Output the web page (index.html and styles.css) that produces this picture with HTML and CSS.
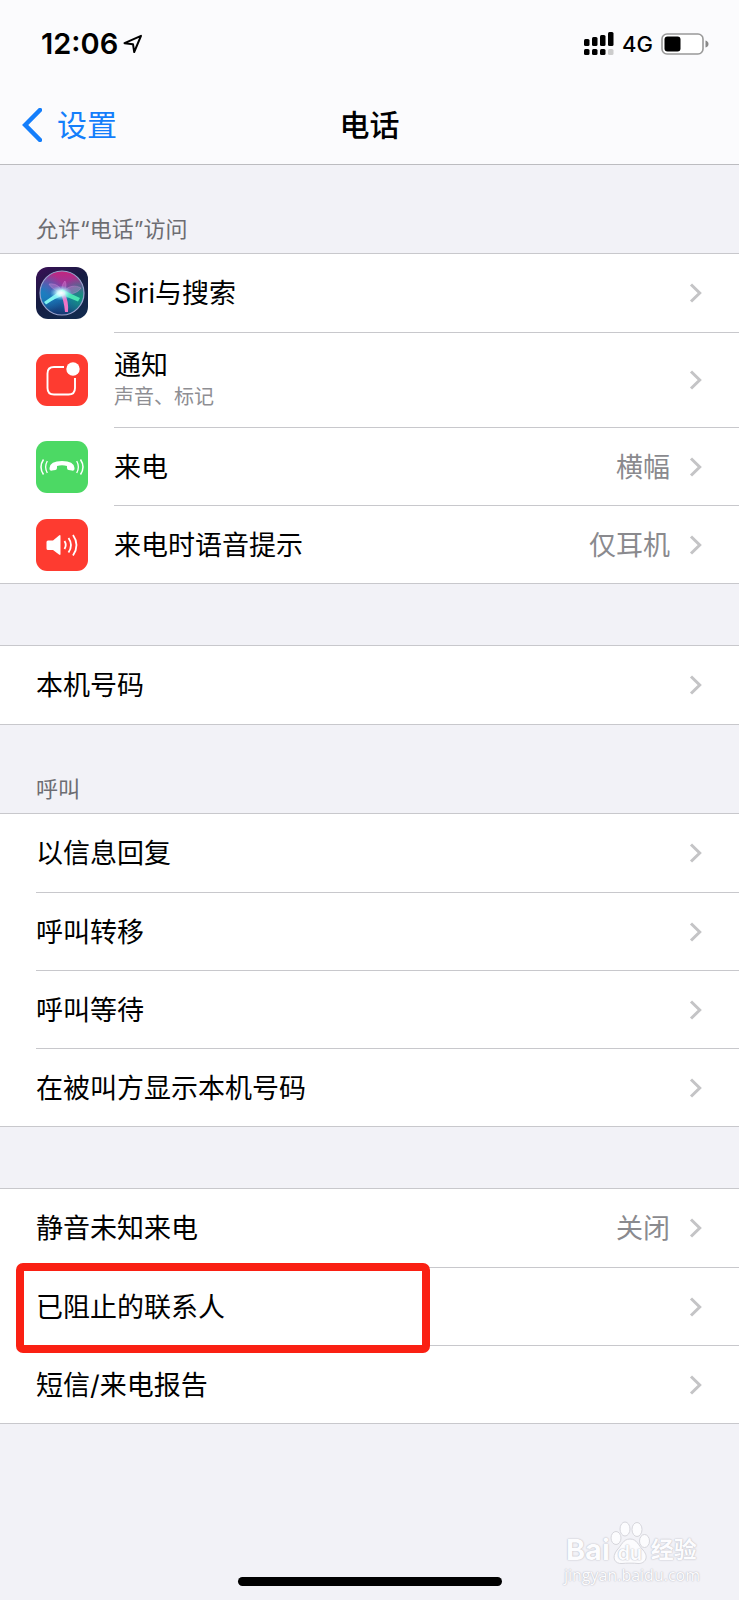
FILE: index.html
```html
<!DOCTYPE html>
<html lang="zh-CN">
<head>
<meta charset="utf-8">
<meta name="viewport" content="width=device-width, initial-scale=1">
<title>电话</title>
<link rel="stylesheet" href="styles.css">
</head>
<body>
<svg class="defs" width="0" height="0" aria-hidden="true">
  <symbol id="chevron" viewBox="0 0 14 22"><path d="M2 2.500 L10.700 11 L2 19.500" fill="none" stroke="currentColor" stroke-width="3"/></symbol>
</svg>
<div class="screen">
  <header class="top">
    <div class="status">
      <div class="status-left">
        <span class="time">12:06</span>
        <svg class="location" viewBox="0 0 20 20" aria-hidden="true"><path d="M1.5 9.2 L18 1.8 L11.2 18 L10 10.2 Z" fill="none" stroke="#000" stroke-width="2" stroke-linejoin="round"/></svg>
      </div>
      <div class="status-right">
        <svg class="signal" viewBox="0 0 30 24" aria-hidden="true">
          <rect x="0" y="7" width="5.500" height="7" rx="1.500"/><rect x="8" y="5" width="5.500" height="9" rx="1.500"/><rect x="16" y="3" width="5.500" height="11" rx="1.500"/><rect x="24" y="0" width="5.500" height="14" rx="1.500"/>
          <rect x="0" y="17" width="5.500" height="6" rx="1.500"/><rect x="8" y="17" width="5.500" height="6" rx="1.500"/><rect x="16" y="17" width="5.500" height="6" rx="1.500"/><rect x="24" y="17" width="5.500" height="6" rx="1.500" fill="#ccc"/>
        </svg>
        <span class="network">4G</span>
        <svg class="battery" viewBox="0 0 48 22" aria-hidden="true">
          <rect x="1" y="1" width="41" height="20" rx="5" fill="#fff" stroke="#999" stroke-width="1.6"/>
          <rect x="3.500" y="3.500" width="16" height="15" rx="3"/>
          <path d="M44.500 7.500 Q47.500 8.500 47.500 11 T44.500 14.500 Z" fill="#888"/>
        </svg>
      </div>
    </div>
    <nav class="nav">
      <a class="back" href="#"><svg viewBox="0 0 20 34" aria-hidden="true"><path d="M18 2 L3.200 17 L18 32" fill="none" stroke="currentColor" stroke-width="4.500" stroke-linecap="round"/></svg>设置</a>
      <h1 class="title">电话</h1>
    </nav>
  </header>
  <main>
    <h2 class="heading">允许“电话”访问</h2>
    <ul class="group with-icons">
      <li class="item"><a class="row" href="#">
        <svg class="icon" viewBox="0 0 52 52" aria-hidden="true">
          <defs>
            <linearGradient id="bg" x1="0" y1="0" x2="0.6" y2="1"><stop offset="0" stop-color="#3b0f56"/><stop offset="0.5" stop-color="#161b42"/><stop offset="1" stop-color="#12294d"/></linearGradient>
            <linearGradient id="orb" x1="0.5" y1="0" x2="0.45" y2="1"><stop offset="0" stop-color="#c3257c"/><stop offset="0.4" stop-color="#8a3eaa"/><stop offset="0.6" stop-color="#1a72b5"/><stop offset="1" stop-color="#15336e"/></linearGradient>
            <radialGradient id="green" cx="0.95" cy="0.6" r="0.5"><stop offset="0" stop-color="#14937c"/><stop offset="1" stop-color="#14937c" stop-opacity="0"/></radialGradient>
            <radialGradient id="blue" cx="0.05" cy="0.5" r="0.5"><stop offset="0" stop-color="#1a7fc0"/><stop offset="1" stop-color="#1a7fc0" stop-opacity="0"/></radialGradient>
            <radialGradient id="glow"><stop offset="0" stop-color="#fff"/><stop offset="0.35" stop-color="#d5ffff" stop-opacity="0.9"/><stop offset="1" stop-color="#64dcff" stop-opacity="0"/></radialGradient>
          </defs>
          <rect width="52" height="52" rx="12" fill="url(#bg)"/>
          <circle cx="26" cy="26" r="22" fill="url(#orb)"/><circle cx="26" cy="26" r="22" fill="url(#green)"/><circle cx="26" cy="26" r="22" fill="url(#blue)"/>
          <path d="M26 26 C20 24 14 20 13 17 C20 16 25 20 26 26 C25 20 27 16 29 14 C31 18 30 23 26 26 C32 18 40 18 45 21 C41 27 33 28 26 26" fill="#e69be0" fill-opacity="0.3" stroke="#dc8de0" stroke-opacity="0.5" stroke-width="0.7"/>
          <path d="M27 22 Q18 28 8 35 L10 37.500 Q19 31 29 28Z" fill="#7ff3f0"/>
          <path d="M26 22 Q35 27 44 31 L42 34.500 Q34 31 25 28Z" fill="#49e3b2"/>
          <path d="M24 25 Q28 33 29 45 L32 45 Q33 34 28 25Z" fill="#f075c7"/>
          <ellipse cx="25" cy="26" rx="11" ry="7.500" fill="url(#glow)"/>
          <circle cx="26" cy="26" r="22" fill="none" stroke="#9aa4cf" stroke-width="1.200"/>
        </svg>
        <span class="label">Siri与搜索</span><svg class="chevron" aria-hidden="true"><use href="#chevron"/></svg></a></li>
      <li class="item"><a class="row tall" href="#">
        <svg class="icon" viewBox="0 0 52 52" aria-hidden="true"><rect width="52" height="52" rx="11" fill="#fe3b30"/><path d="M28 13 H18 Q11.500 13 11.500 19.500 V34 Q11.500 40.500 18 40.500 H32.500 Q39 40.500 39 34 V24" fill="none" stroke="#fff" stroke-width="1.900"/><circle cx="37" cy="15" r="6.700" fill="#fff"/></svg>
        <span class="label">通知<small class="sub">声音、标记</small></span><svg class="chevron" aria-hidden="true"><use href="#chevron"/></svg></a></li>
      <li class="item"><a class="row" href="#">
        <svg class="icon" viewBox="0 0 52 52" aria-hidden="true"><rect width="52" height="52" rx="11" fill="#4cd964"/><path d="M13.500 27 Q14 20 26 20 Q38 20 38.500 27 Q38.700 30 36 29.600 L32.500 29 Q30.800 28.500 31 26.500 V25 Q26 23.500 21 25 V26.500 Q21.200 28.500 19.500 29 L16 29.600 Q13.300 30 13.500 27Z" fill="#fff"/><path d="M11.300 20 Q8 26 11.300 32 M40.700 20 Q44 26 40.700 32" fill="none" stroke="#fff" stroke-width="1.300"/><path d="M7.500 18.500 Q2.500 26 7.500 33.500 M44.500 18.500 Q49.500 26 44.500 33.500" fill="none" stroke="#fff" stroke-width="1.500"/></svg>
        <span class="label">来电</span><span class="value">横幅</span><svg class="chevron" aria-hidden="true"><use href="#chevron"/></svg></a></li>
      <li class="item"><a class="row" href="#">
        <svg class="icon" viewBox="0 0 52 52" aria-hidden="true"><rect width="52" height="52" rx="11" fill="#fe3b30"/><path d="M12 21.500 H17 L23 16.500 Q24.500 15.500 24.500 17 V35 Q24.500 36.500 23 35.500 L17 31 H12 Q10.500 31 10.500 29.500 V23 Q10.500 21.500 12 21.500Z" fill="#fff"/><path d="M28.500 22 Q31 26 28.500 30 M32.500 19 Q37.500 26 32.500 33.500 M37 16 Q44 26 37 36.500" fill="none" stroke="#fff" stroke-width="1.800"/></svg>
        <span class="label">来电时语音提示</span><span class="value">仅耳机</span><svg class="chevron" aria-hidden="true"><use href="#chevron"/></svg></a></li>
    </ul>
    <ul class="group spaced">
      <li class="item"><a class="row" href="#"><span class="label">本机号码</span><svg class="chevron" aria-hidden="true"><use href="#chevron"/></svg></a></li>
    </ul>
    <h2 class="heading">呼叫</h2>
    <ul class="group">
      <li class="item"><a class="row" href="#"><span class="label">以信息回复</span><svg class="chevron" aria-hidden="true"><use href="#chevron"/></svg></a></li>
      <li class="item"><a class="row" href="#"><span class="label">呼叫转移</span><svg class="chevron" aria-hidden="true"><use href="#chevron"/></svg></a></li>
      <li class="item"><a class="row" href="#"><span class="label">呼叫等待</span><svg class="chevron" aria-hidden="true"><use href="#chevron"/></svg></a></li>
      <li class="item"><a class="row" href="#"><span class="label">在被叫方显示本机号码</span><svg class="chevron" aria-hidden="true"><use href="#chevron"/></svg></a></li>
    </ul>
    <ul class="group spaced">
      <li class="item"><a class="row" href="#"><span class="label">静音未知来电</span><span class="value">关闭</span><svg class="chevron" aria-hidden="true"><use href="#chevron"/></svg></a></li>
      <li class="item marked"><a class="row" href="#"><span class="label">已阻止的联系人</span><svg class="chevron" aria-hidden="true"><use href="#chevron"/></svg></a></li>
      <li class="item"><a class="row" href="#"><span class="label">短信/来电报告</span><svg class="chevron" aria-hidden="true"><use href="#chevron"/></svg></a></li>
    </ul>
  </main>
  <footer class="bottom">
    <div class="watermark">
      <div class="brand">
        <span>Bai</span>
        <span class="paw"><svg viewBox="0 0 40 44" aria-hidden="true"><g fill="#fcfcfe" stroke="#d6d6dc" stroke-width="1"><ellipse cx="6" cy="17" rx="5" ry="6.500"/><ellipse cx="15" cy="8" rx="5" ry="7"/><ellipse cx="27" cy="8.500" rx="5" ry="7"/><ellipse cx="34.500" cy="20" rx="5" ry="6.500"/><path d="M20 18 C27 18 28 24 33 29 C40 37 34 43 28 42.500 C24 42 16 42 12 42.500 C5 43 1 37 7 29 C12 24 13 18 20 18Z"/></g></svg><span class="du">du</span></span>
        <span class="cn">经验</span>
      </div>
      <div class="domain">jingyan.baidu.com</div>
    </div>
    <div class="home"></div>
  </footer>
</div>
</body>
</html>
```
FILE: styles.css
```css
*, *::after { box-sizing: border-box; }
body {
  margin: 0;
  background: #f2f2f7;
  color: #000;
  font-family: Inter, "Noto Sans CJK SC", sans-serif;
}
a { color: inherit; text-decoration: none; }
h1, h2, ul { margin: 0; padding: 0; font-weight: 400; }
ul { list-style: none; }
.defs { position: absolute; }
.screen { display: flex; flex-direction: column; min-height: 100vh; }

.top { background: #fbfbfd; border-bottom: 1px solid #bcbcc0; }
.status {
  display: flex;
  justify-content: space-between;
  align-items: center;
  height: 88px;
  padding: 0 30px 0 41px;
}
.status-left { display: flex; align-items: center; gap: 5px; }
.time { font-size: 29px; font-weight: 600; line-height: 36px; }
.location { width: 20px; height: 20px; }
.status-right { display: flex; align-items: center; gap: 8px; }
.signal { width: 30px; height: 24px; }
.network { font-size: 22px; font-weight: 500; line-height: 28px; }
.battery { width: 48px; height: 22px; }
.nav {
  display: grid;
  grid-template-columns: 1fr auto 1fr;
  align-items: center;
  height: 76px;
  padding: 0 22px 3px;
}
.back { display: flex; align-items: center; gap: 15px; color: #147efb; font-size: 30px; line-height: 40px; }
.back svg { width: 20px; height: 34px; }
.title { font-size: 30px; font-weight: 500; line-height: 40px; }

.heading {
  padding: 49px 36px 9px;
  color: #6d6d72;
  font-size: 22px;
  line-height: 30px;
}
.group { background: #fff; border-top: 1px solid #c8c8cc; border-bottom: 1px solid #c8c8cc; }
.spaced { margin-top: 61px; }
.item { position: relative; padding-left: 36px; }
.row { display: flex; align-items: center; min-height: 78px; padding-right: 36px; }
.item .tall { min-height: 95px; }
.item + .item .row { border-top: 1px solid #c8c8cc; }
.with-icons .item { padding-left: 114px; }
.icon { width: 52px; height: 52px; margin-left: -78px; margin-right: 26px; }
.label { flex: 1; padding-top: 2px; font-size: 27px; line-height: 36px; }
.tall .label { padding: 0 0 2px; }
.sub { display: block; color: #8e8e93; font-size: 20px; line-height: 26px; }
.value { padding-top: 2px; color: #8a8a8e; font-size: 27px; line-height: 36px; }
.chevron { width: 14px; height: 22px; margin-left: 19px; color: #c4c4c6; }
.marked::after {
  content: "";
  position: absolute;
  z-index: 1;
  left: 16px;
  top: -4px;
  bottom: -8px;
  width: 56%;
  border: 8px solid #fa2013;
  border-radius: 7px;
  pointer-events: none;
}

.bottom { display: grid; flex: 1; align-items: end; padding-bottom: 14px; }
.bottom > * { grid-area: 1 / 1; }
.watermark { justify-self: end; margin-right: 39px; margin-bottom: 1px; color: #fcfcfe; text-shadow: 0 0 1px #b8b8c0, 0 0 2px #c8c8d0; }
.brand { display: flex; align-items: flex-end; padding-left: 2px; font-size: 29px; font-weight: 700; line-height: 30px; }
.paw { position: relative; width: 40px; height: 44px; }
.paw svg { display: block; }
.du { position: absolute; left: 0; right: 0; bottom: 0; font-size: 20px; font-weight: 600; line-height: 24px; text-align: center; }
.cn { padding-left: 1px; font-size: 23px; }
.domain { font-family: "Open Sans", sans-serif; font-size: 16px; line-height: 20px; }
.home { justify-self: center; width: 264px; height: 9px; border-radius: 5px; background: #000; }
```
